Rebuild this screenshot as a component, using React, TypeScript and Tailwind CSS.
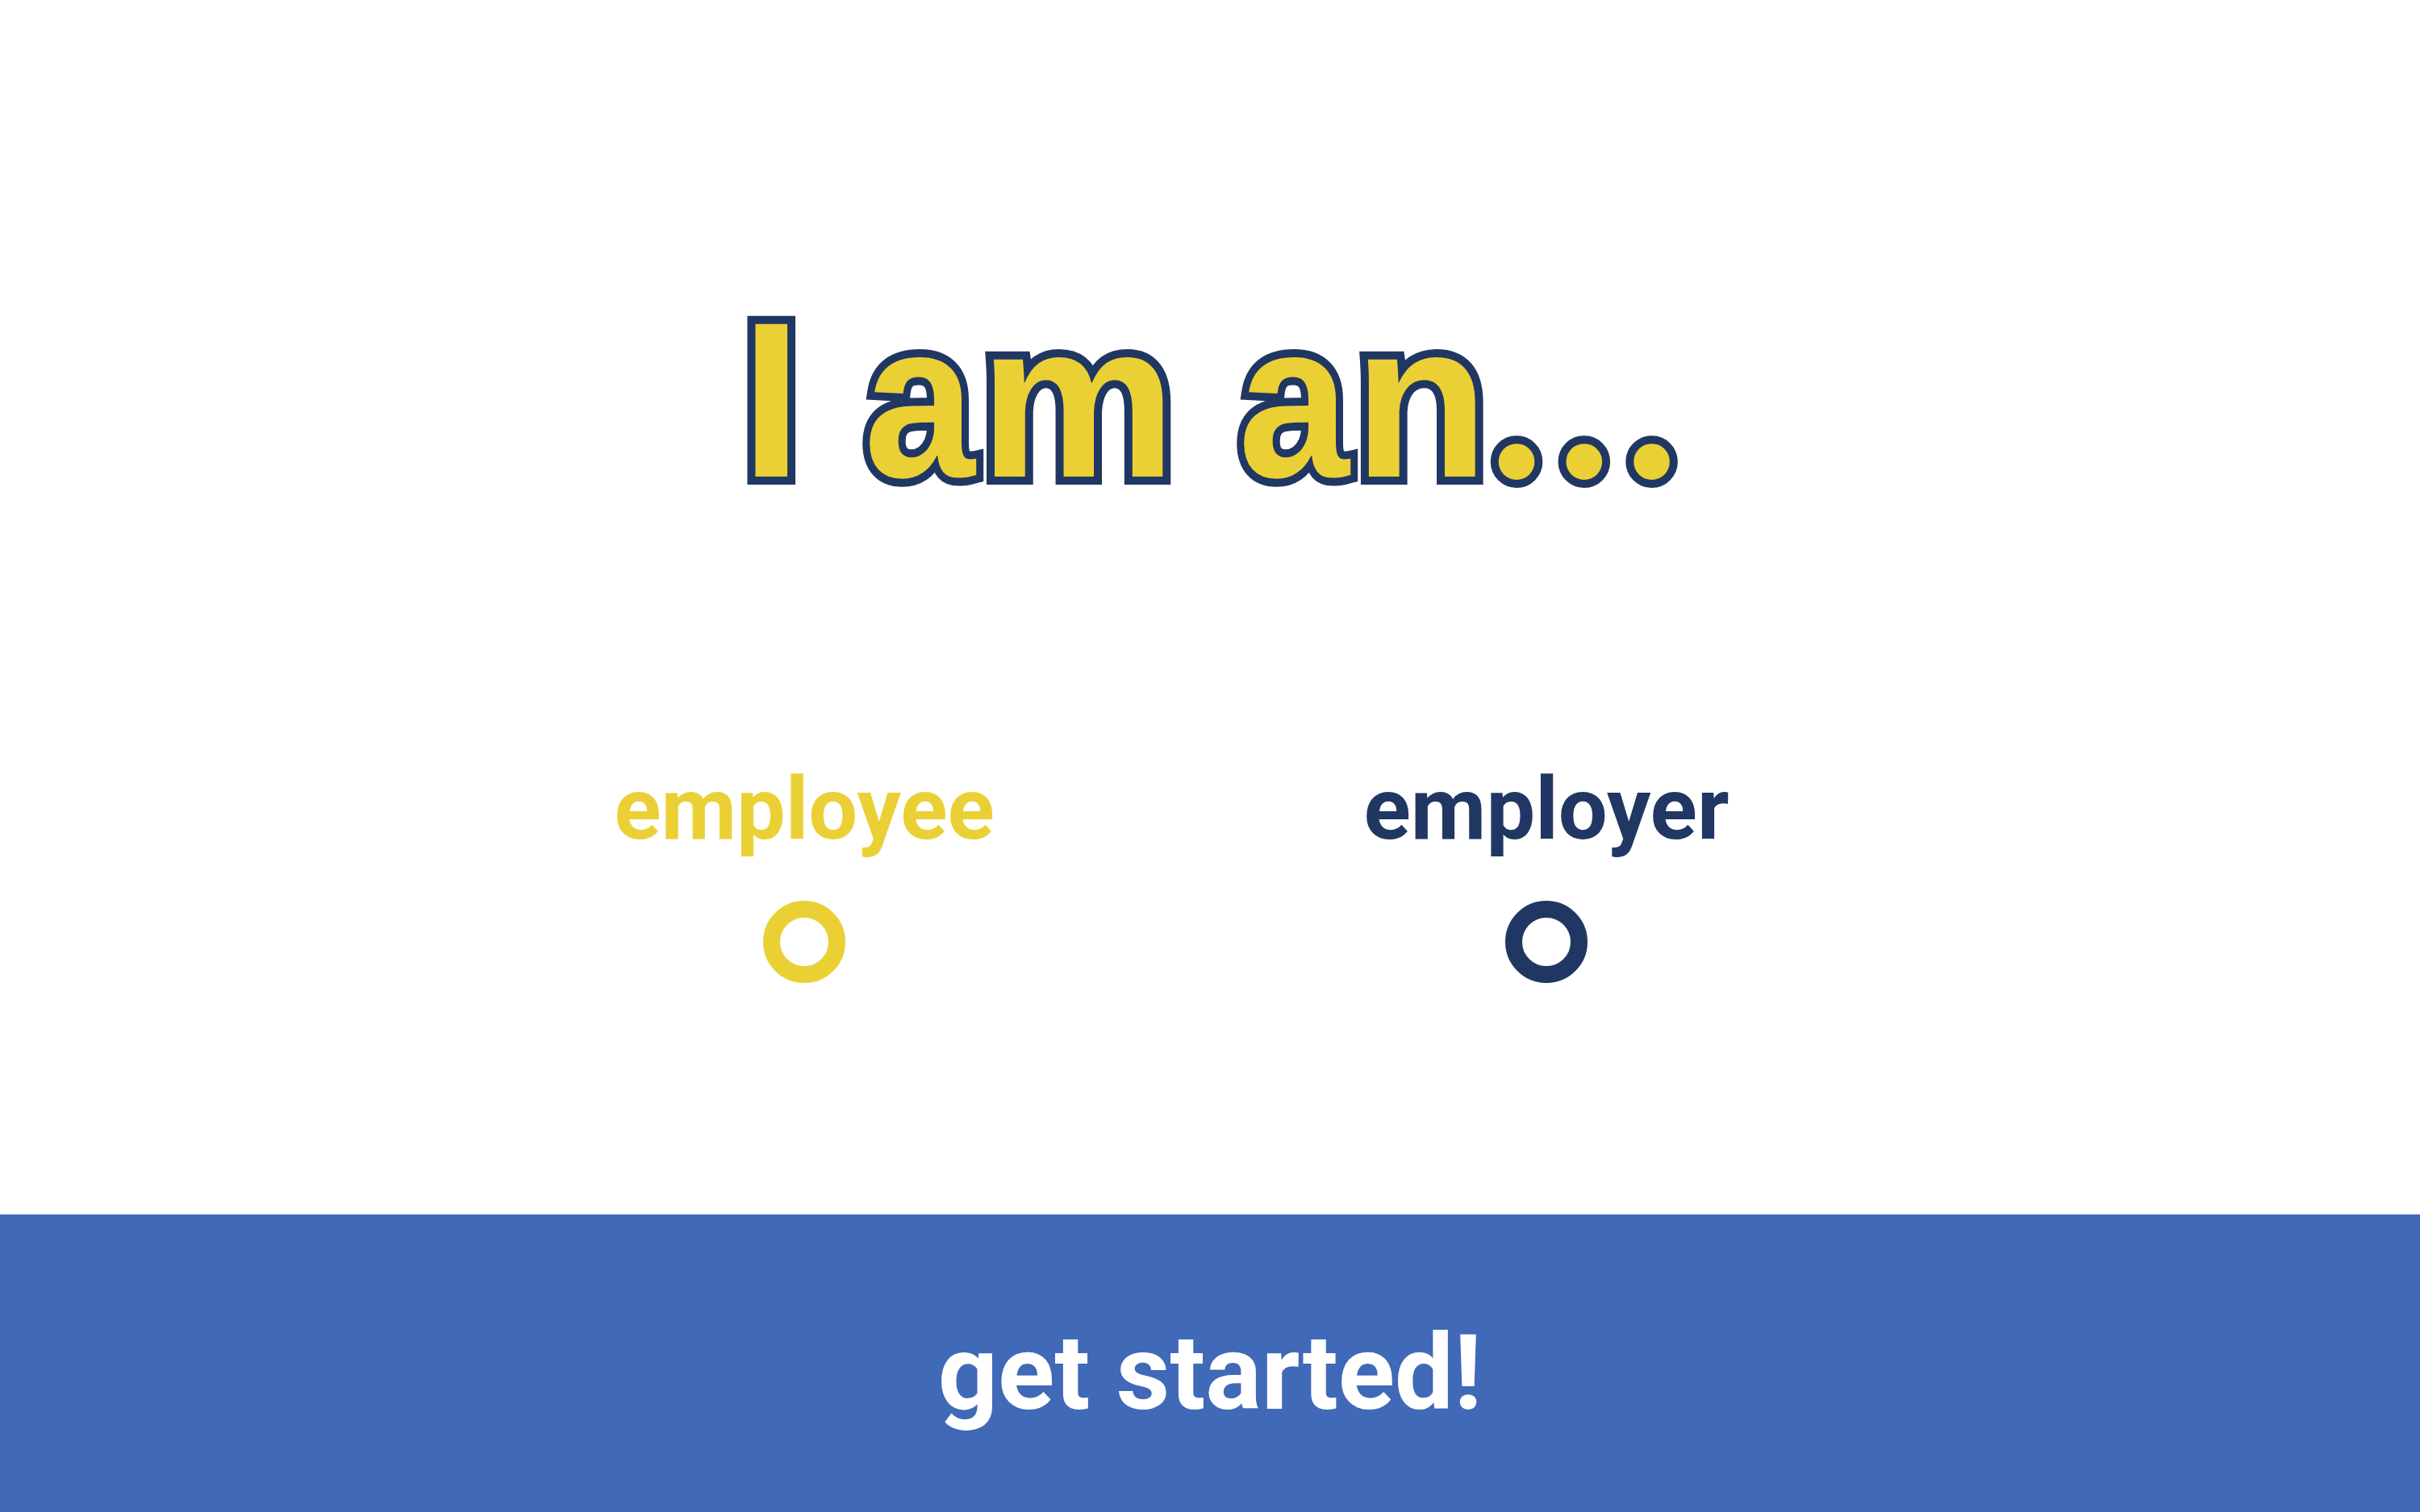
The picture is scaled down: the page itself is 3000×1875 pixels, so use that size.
export default function App() {
  return (
    <div className="h-screen w-full flex flex-col bg-white font-['Roboto',sans-serif]">
      <main className="flex-1 flex flex-col">
        <h1 className="pt-[358px] text-center font-['Liberation_Sans',Arial,sans-serif] font-bold text-[275px] leading-none text-[#ebd035] [-webkit-text-stroke:20px_#213763] [paint-order:stroke_fill] [stroke-linejoin:round]">
          I <span className="inline-block origin-left scale-x-90 mr-[-10px]">a</span>m{" "}
          <span className="inline-block origin-left scale-x-90 mr-[-10px]">a</span>n
          <span className="font-['Liberation_Serif',serif] leading-[0] tracking-[15px] mr-[-15px]">...</span>
        </h1>

        <div className="mt-[316px] ml-[537px] grid grid-cols-[920px_920px]">
          <label className="flex flex-col items-center gap-[60px] cursor-pointer">
            <span className="text-[108px] leading-none font-bold text-[#ebd035]">employee</span>
            <span className="w-[102px] h-[102px] rounded-full border-[21px] border-[#ebd035]" />
          </label>
          <label className="flex flex-col items-center gap-[60px] cursor-pointer">
            <span className="text-[108px] leading-none font-bold text-[#213763]">employer</span>
            <span className="w-[102px] h-[102px] rounded-full border-[21px] border-[#213763]" />
          </label>
        </div>
      </main>

      <button className="h-[369px] w-full bg-[#4069b7] pt-[132px] flex justify-center items-start">
        <span className="text-[130px] leading-none font-bold text-white">get started!</span>
      </button>
    </div>
  );
}
